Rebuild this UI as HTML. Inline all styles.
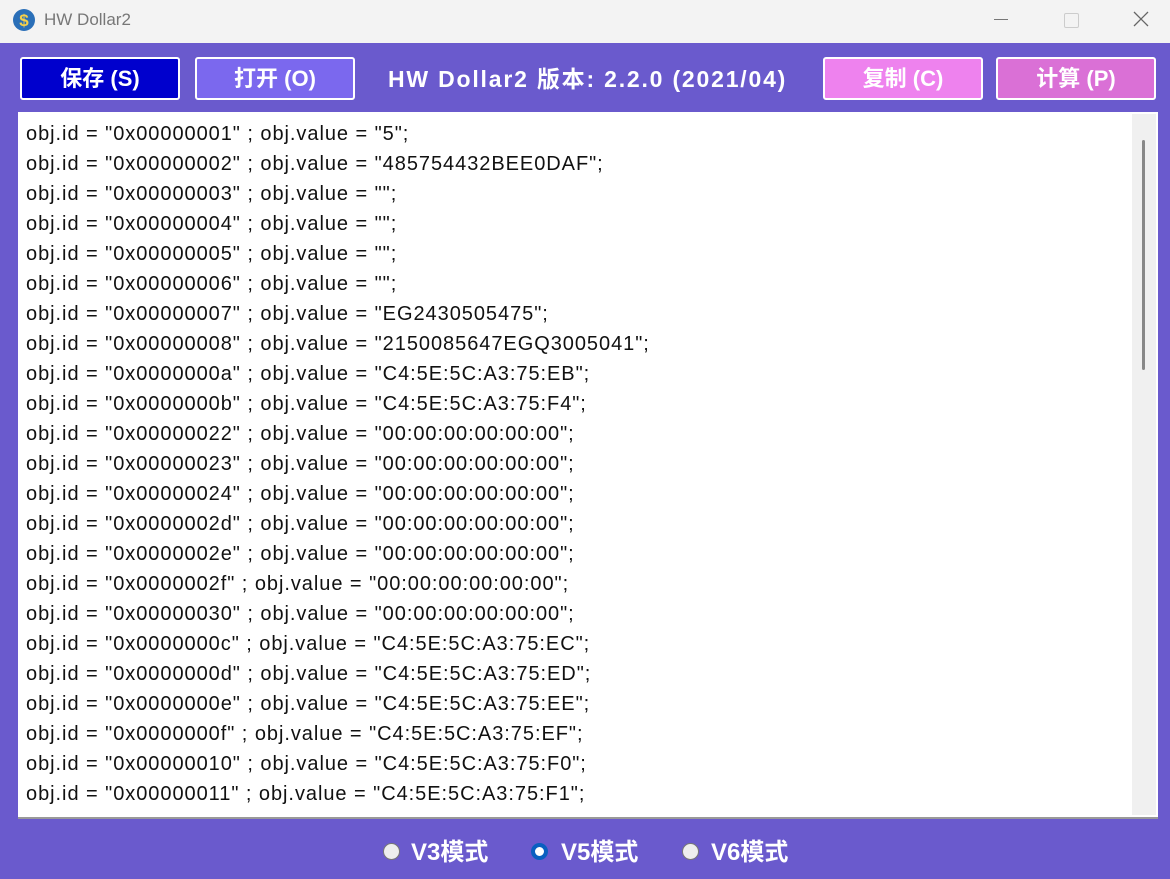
<!DOCTYPE html><html><head><meta charset="utf-8"><style>
body{margin:0;width:1170px;height:879px;overflow:hidden;background:#6a5acd;font-family:"Liberation Sans","Noto Sans CJK SC",sans-serif;position:relative}
.tb{position:absolute;left:0;top:0;width:1170px;height:43px;background:#f3f3f3}
.btn{position:absolute;top:57px;height:39px;width:156px;border:2px solid #fff;border-radius:3px;color:#fff;font-weight:bold;font-size:22px;text-align:center;line-height:39px}
.area{position:absolute;left:18px;top:112px;width:1140px;height:705px;background:#fff;border-bottom:2px solid #999}
.ln{position:absolute;left:8px;font-size:20px;color:#111;white-space:pre;letter-spacing:0.95px}
.r{position:absolute;top:832px;color:#fff;font-weight:bold;font-size:24px}
.c{position:absolute;top:843px;width:15px;height:15px;border-radius:50%;background:#eee;border:1px solid #777}
</style></head><body>
<div class="tb">
<svg style="position:absolute;left:12px;top:8px" width="24" height="24"><circle cx="12" cy="12" r="11" fill="#2a6fb8"/><text x="12" y="18" fill="#f5d04a" font-size="17" font-weight="bold" text-anchor="middle" font-family="Liberation Sans">$</text></svg>
<div style="position:absolute;left:44px;top:10px;font-size:17px;color:#777">HW Dollar2</div>
<div style="position:absolute;left:994px;top:19px;width:14px;height:1px;background:#777"></div>
<div style="position:absolute;left:1064px;top:13px;width:13px;height:13px;border:1px solid #ccc;border-radius:2px"></div>
<svg style="position:absolute;left:1133px;top:11px" width="16" height="16"><path d="M1 1L15 15M15 1L1 15" stroke="#666" stroke-width="1.3"/></svg>
</div>
<div class="btn" style="left:20px;background:#0000cd">保存 (S)</div>
<div class="btn" style="left:195px;background:#7b68ee">打开 (O)</div>
<div style="position:absolute;left:388px;top:60px;color:#fff;font-weight:bold;font-size:23px;letter-spacing:1.8px;white-space:nowrap">HW Dollar2 版本: 2.2.0 (2021/04)</div>
<div class="btn" style="left:823px;background:#ee82ee">复制 (C)</div>
<div class="btn" style="left:996px;background:#da70d6">计算 (P)</div>
<div class="area">
<div style="position:absolute;left:1114px;top:2px;width:24px;height:701px;background:#f0f0f0"></div>
<div style="position:absolute;left:1124px;top:28px;width:3px;height:230px;background:#888;border-radius:2px"></div>
<div id="t"></div>
</div>
<div class="c" style="left:383px"></div><div class="r" style="left:411px">V3模式</div>
<div class="c" style="left:531px;background:#fff;border:4px solid #0a5fc0;width:9px;height:9px"></div><div class="r" style="left:561px">V5模式</div>
<div class="c" style="left:682px"></div><div class="r" style="left:711px">V6模式</div>
<script>
var d=[["00000001","5"],["00000002","485754432BEE0DAF"],["00000003",""],["00000004",""],["00000005",""],["00000006",""],["00000007","EG2430505475"],["00000008","2150085647EGQ3005041"],["0000000a","C4:5E:5C:A3:75:EB"],["0000000b","C4:5E:5C:A3:75:F4"],["00000022","00:00:00:00:00:00"],["00000023","00:00:00:00:00:00"],["00000024","00:00:00:00:00:00"],["0000002d","00:00:00:00:00:00"],["0000002e","00:00:00:00:00:00"],["0000002f","00:00:00:00:00:00"],["00000030","00:00:00:00:00:00"],["0000000c","C4:5E:5C:A3:75:EC"],["0000000d","C4:5E:5C:A3:75:ED"],["0000000e","C4:5E:5C:A3:75:EE"],["0000000f","C4:5E:5C:A3:75:EF"],["00000010","C4:5E:5C:A3:75:F0"],["00000011","C4:5E:5C:A3:75:F1"]];
var h="";d.forEach(function(x,i){h+='<div class="ln" style="top:'+(11+i*30)+'px">obj.id = "0x'+x[0]+'" ; obj.value = "'+x[1]+'";</div>'});document.getElementById("t").innerHTML=h;
</script>
</body></html>
